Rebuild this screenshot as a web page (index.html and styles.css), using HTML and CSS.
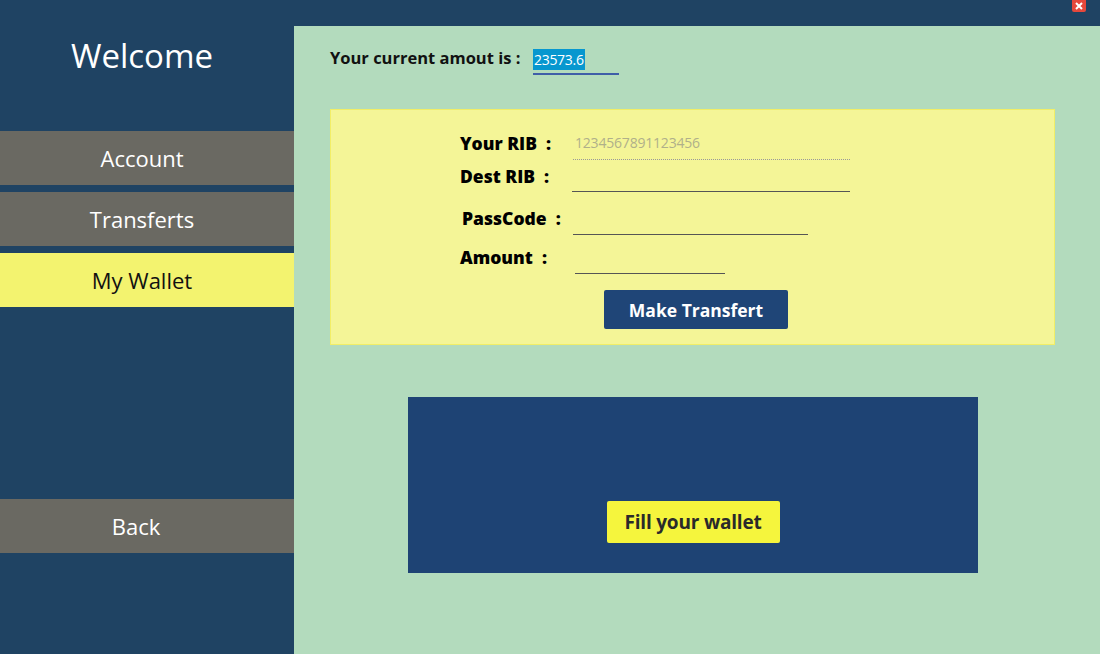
FILE: index.html
```html
<!DOCTYPE html>
<html>
<head>
<meta charset="utf-8">
<link rel="stylesheet" href="styles.css">
</head>
<body>
<div class="window">
  <div class="titlebar">
    <div class="close"><svg width="10" height="8" viewBox="0 0 10 8"><path d="M2 1 L8 7 M8 1 L2 7" stroke="#fff" stroke-width="2" fill="none"/></svg></div>
  </div>
  <div class="content">
    <aside class="sidebar">
      <div class="welcome">Welcome</div>
      <nav class="nav">
        <div class="nav-item">Account</div>
        <div class="nav-item">Transferts</div>
        <div class="nav-item active">My Wallet</div>
      </nav>
      <div class="nav-item back">Back</div>
    </aside>
    <main class="main">
      <div class="amount-row">
        <span class="amount-label">Your current amout is :</span>
        <span class="amount-field"><span class="sel">23573.6</span></span>
      </div>
      <section class="transfer-panel">
        <div class="row r1">
          <span class="label">Your RIB&nbsp; :</span>
          <span class="input rib">1234567891123456</span>
        </div>
        <div class="row r2">
          <span class="label">Dest RIB&nbsp; :</span>
          <span class="input dest"></span>
        </div>
        <div class="row r3">
          <span class="label pass">PassCode&nbsp; :</span>
          <span class="input code"></span>
        </div>
        <div class="row r4">
          <span class="label">Amount&nbsp; :</span>
          <span class="input amt"></span>
        </div>
        <div class="btn-row"><button class="btn-transfer">Make Transfert</button></div>
      </section>
      <section class="wallet-panel">
        <button class="btn-fill">Fill your wallet</button>
      </section>
    </main>
  </div>
</div>
</body>
</html>
```
FILE: styles.css
```css
* { box-sizing: border-box; }
html, body { margin: 0; padding: 0; }
body {
  width: 1100px;
  height: 654px;
  overflow: hidden;
  background: #1f4363;
  font-family: "Open Sans", "Noto Sans", sans-serif;
}
.window { display: flex; flex-direction: column; height: 654px; }
.titlebar {
  height: 26px;
  display: flex;
  justify-content: flex-end;
  align-items: flex-start;
  padding-right: 14px;
}
.close {
  width: 14px;
  height: 12px;
  background: #e5483c;
  border-radius: 0 0 2px 2px;
  display: flex;
  align-items: center;
  justify-content: center;
}
.close svg { display: block; }
.content { flex: 1; display: flex; }
.sidebar {
  width: 294px;
  display: flex;
  flex-direction: column;
}
.welcome {
  color: #fff;
  font-size: 33px;
  line-height: 40px;
  text-align: center;
  padding-right: 10px;
  margin-top: 10px;
  height: 95px;
}
.nav { display: flex; flex-direction: column; gap: 7px; }
.nav-item {
  height: 54px;
  background: #6a6962;
  color: #fff;
  font-size: 22px;
  display: flex;
  align-items: center;
  justify-content: center;
  padding-right: 10px;
}
.nav-item.active { background: #f3f36f; color: #111; }
.nav-item.back { margin-top: 192px; padding-right: 22px; }

.main {
  flex: 1;
  background: #b3dbbd;
  padding: 0 45px 0 36px;
  font-family: "Open Sans", sans-serif;
}
.amount-row {
  display: flex;
  align-items: flex-start;
  height: 83px;
  padding-top: 20px;
}
.amount-label {
  font-weight: 700;
  font-size: 16.5px;
  line-height: 24px;
  color: #111;
  width: 203px;
  letter-spacing: 0;
  white-space: nowrap;
}
.amount-field {
  width: 86px;
  height: 29px;
  border-bottom: 2px solid #3f5ea8;
  padding-top: 2px;
}
.sel {
  display: inline-block;
  background: #0797cf;
  color: #fff;
  font-family: "Open Sans", sans-serif;
  font-size: 14px;
  line-height: 21px;
  height: 21px;
  padding: 0 1px;
  letter-spacing: -0.3px;
}
.transfer-panel {
  height: 236px;
  background: #f4f597;
  border: 1px solid #f2ee66;
  padding: 16px 0 0 129px;
}
.row { display: flex; align-items: flex-end; }
.r1 { height: 34px; }
.r2 { height: 32px; }
.r3 { height: 43px; }
.r4 { height: 39px; }
.label {
  width: 112px;
  font-weight: 800;
  font-size: 17.5px;
  line-height: 22px;
  color: #000;
  margin-bottom: 6px;
  white-space: nowrap;
  letter-spacing: 0;
}
.r2 .label { margin-bottom: 5px; }
.label.pass { padding-left: 2px; }
.input { display: block; border-bottom: 1px solid #555; }
.rib {
  width: 277px;
  height: 33px;
  border-bottom: 1px dotted #999;
  color: #b0b08a;
  font-family: "Open Sans", sans-serif;
  font-size: 14px;
  line-height: 20px;
  padding: 6px 0 0 2px;
  letter-spacing: -0.2px;
  margin-left: 1px;
}
.dest { width: 278px; height: 28px; }
.code { width: 235px; height: 28px; margin-left: 1px; }
.amt { width: 150px; height: 28px; margin-left: 3px; }
.btn-row { padding-left: 144px; margin-top: 16px; }
.btn-transfer {
  width: 184px;
  height: 39px;
  background: #1f4577;
  color: #fff;
  border: none;
  border-radius: 2px;
  font-family: "Open Sans", sans-serif;
  font-weight: 700;
  font-size: 17.5px;
  letter-spacing: 0;
  padding: 0;
}
.wallet-panel {
  margin: 52px 0 0 78px;
  width: 570px;
  height: 176px;
  background: #1e4374;
  display: flex;
  justify-content: center;
  align-items: flex-end;
  padding-bottom: 30px;
}
.btn-fill {
  width: 173px;
  height: 42px;
  background: #f5f53d;
  color: #2a2a2a;
  border: none;
  border-radius: 2px;
  font-family: "Open Sans", sans-serif;
  font-weight: 700;
  font-size: 19px;
  letter-spacing: -0.2px;
  padding: 0;
}
```
